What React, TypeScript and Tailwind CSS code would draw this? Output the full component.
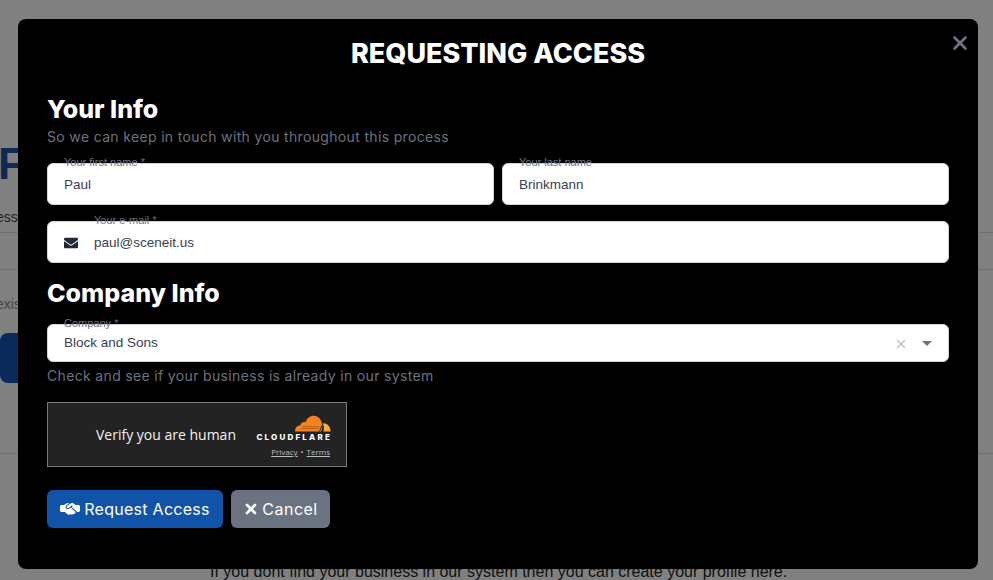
import { FaEnvelope } from "react-icons/fa";
import { FaHandshakeSimple } from "react-icons/fa6";
import { X } from "lucide-react";

const heading = "font-['Inter','Noto_Sans',sans-serif]";
const arial = "font-['Liberation_Sans',Arial,sans-serif]";

function FloatingField({
  label,
  value,
  icon,
  className,
}: {
  label: string;
  value: string;
  icon?: boolean;
  className?: string;
}) {
  return (
    <div className={`relative flex h-[42px] items-center rounded-[6px] border border-[#d1d5db] bg-white pt-[2px] pl-4 ${arial} ${className ?? ""}`}>
      {icon && <FaEnvelope className="mr-4 h-[14px] w-[14px] text-[#1f2937]" />}
      <span className="text-[13.5px] text-[#374151]">{value}</span>
      <span className={`absolute -top-[8px] text-[11px] leading-[13px] text-[#6b7280] ${icon ? "left-[46px]" : "left-4"}`}>{label}</span>
    </div>
  );
}

function CloudflareCloud() {
  return (
    <svg width="37" height="17" viewBox="0 0 37 17">
      <path
        d="M27 16.5H1C1 12.8 3.2 10.4 6.4 10.2C7 7.8 9.2 6.6 11.6 7.2C13 3 16.4.6 20 .8C24.2 1 27.4 4.2 27.8 8.4C28.6 11 28.4 14 27 16.5Z"
        fill="#f6821f"
      />
      <path d="M28.6 8.2C33 7.8 36.6 11.4 36.6 16.5H29.4C30.4 13.6 30 10.6 28.6 8.2Z" fill="#fbad41" />
      <path d="M8 11.7H26.5M7 13.4H25" stroke="#232323" strokeWidth="0.6" opacity="0.55" />
      <path d="M28 10.5L25.5 16.5" stroke="#232323" strokeWidth="1" />
    </svg>
  );
}

function Turnstile() {
  return (
    <div className="flex h-[65px] w-[300px] items-center justify-between border border-[#797979] bg-[#232323] pr-[15px] pl-[48px]">
      <span className="font-['Open_Sans',sans-serif] text-[14px] text-[#f2f2f2]">Verify you are human</span>
      <div className="flex flex-col items-end pt-[3px]">
        <CloudflareCloud />
        <span className="-mr-[1px] font-['Inter',sans-serif] text-[8px] leading-[10px] font-extrabold tracking-[2.2px] text-white">CLOUDFLARE</span>
        <div className="mt-[4px] mr-[1px] flex gap-[3px] font-['Open_Sans',sans-serif] text-[8px] leading-[11px] text-[#bdbdbd]">
          <span className="underline">Privacy</span>
          <span>•</span>
          <span className="underline">Terms</span>
        </div>
      </div>
    </div>
  );
}

function PageBehind() {
  return (
    <div className={`h-[580px] w-full overflow-hidden bg-[#808080] ${arial}`}>
      <div className="h-[139px]" />
      <div className="-ml-[2px] h-[50px] text-[44px] leading-[50px] font-bold text-[#0f2a52]">F</div>
      <div className="mt-[18px] h-[26px] border-b border-[#707070] -indent-[4px] text-[14px] leading-[20px] text-[#222]">ess</div>
      <div className="h-[37px] border-b border-[#707070]" />
      <div className="mt-[24px] h-[20px] -indent-[4px] text-[14px] leading-[20px] text-[#444]">exis</div>
      <div className="mt-[19px] h-[50px] w-[30px] rounded-[8px] bg-[#0a2a5c]" />
      <div className="h-[71px] border-b border-[#707070]" />
      <div className="mt-[108px] pl-[210px] text-[16px] leading-[20px] whitespace-nowrap text-[#111]">If you dont find your business in our system then you can create your profile here.</div>
    </div>
  );
}

export default function App() {
  return (
    <div className="relative h-[580px] w-[993px] overflow-hidden">
      <PageBehind />
      <div className={`absolute top-[19px] left-[18px] h-[550px] w-[960px] rounded-[8px] bg-black px-[29px] pt-[15px] ${heading}`}>
        <X strokeWidth={3} className="absolute top-[13px] right-[7px] h-[22px] w-[22px] text-[#6b7280]" />
        <h1 className="text-center text-[27px] leading-[40px] font-extrabold text-white">REQUESTING ACCESS</h1>
        <h2 className="mt-[19px] text-[25px] leading-[32px] font-extrabold text-white">Your Info</h2>
        <p className="mt-[1px] text-[14px] leading-[22px] tracking-[0.34px] text-[#6b7280]">So we can keep in touch with you throughout this process</p>
        <div className="mt-[15px] flex gap-2">
          <FloatingField label="Your first name *" value="Paul" className="flex-1" />
          <FloatingField label="Your last name" value="Brinkmann" className="flex-1" />
        </div>
        <FloatingField label="Your e-mail *" value="paul@sceneit.us" icon className="mt-4" />
        <h2 className="mt-[14px] text-[25px] leading-[32px] font-extrabold text-white">Company Info</h2>
        <div className={`relative mt-[15px] flex h-[38px] items-center justify-between rounded-[6px] border border-[#d1d5db] bg-white pt-[1px] pr-4 pl-4 ${arial}`}>
          <span className="text-[13.5px] text-[#374151]">Block and Sons</span>
          <span className="absolute -top-[8px] left-4 text-[11px] leading-[13px] text-[#6b7280]">Company *</span>
          <div className="flex items-center gap-[14px]">
            <X strokeWidth={3} className="h-[14px] w-[14px] text-[#c4c8ce]" />
            <span className="h-0 w-0 border-x-[5px] border-t-[5px] border-x-transparent border-t-[#6b7280]" />
          </div>
        </div>
        <p className="mt-[3px] text-[14px] leading-[22px] tracking-[0.34px] text-[#6b7280]">Check and see if your business is already in our system</p>
        <div className="mt-[15px]">
          <Turnstile />
        </div>
        <div className="mt-[23px] flex gap-2">
          <button className="flex h-[38px] w-[176px] items-center justify-center gap-[4px] rounded-[6px] bg-[#1053a8] pb-[1px] text-[16px] tracking-[0.28px] text-white">
            <FaHandshakeSimple className="h-[20px] w-[20px]" />
            Request Access
          </button>
          <button className="flex h-[38px] w-[99px] items-center justify-center gap-[3px] rounded-[6px] bg-[#6b7280] pb-[1px] text-[16px] tracking-[0.5px] text-white">
            <X strokeWidth={4} className="h-[16px] w-[16px]" />
            Cancel
          </button>
        </div>
      </div>
    </div>
  );
}
